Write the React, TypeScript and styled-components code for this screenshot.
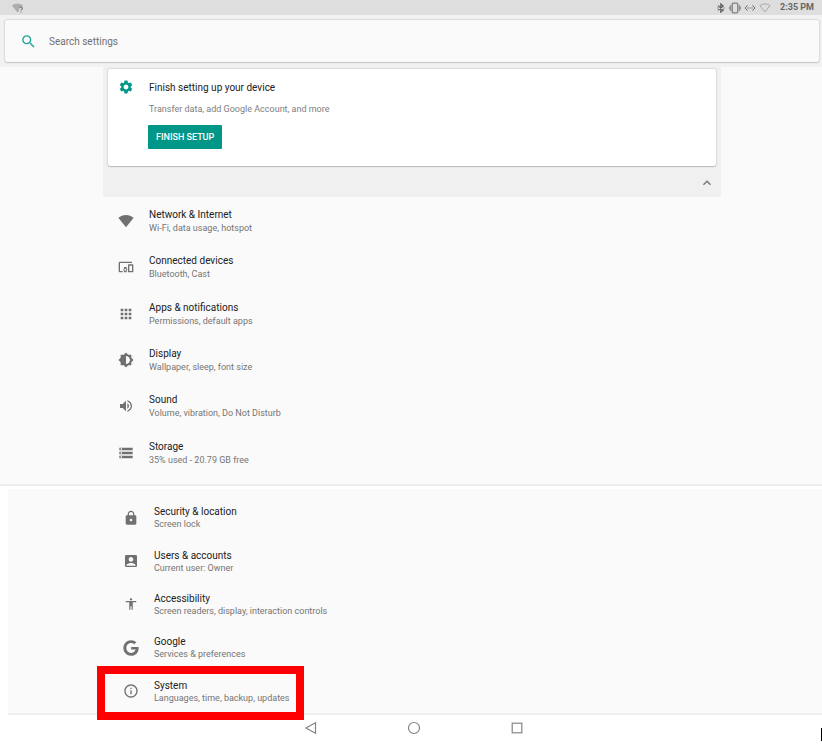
import React from "react";
import styled, { createGlobalStyle } from "styled-components";
import { FaGoogle } from "react-icons/fa";
import {
  MdAccessibility,
  MdAccountBox,
  MdApps,
  MdBrightness6,
  MdDevicesOther,
  MdInfoOutline,
  MdKeyboardArrowUp,
  MdLock,
  MdSearch,
  MdSettings,
  MdStorage,
  MdVolumeUp,
} from "react-icons/md";

const GlobalStyle = createGlobalStyle`
  * { box-sizing: border-box; }
  body {
    margin: 0;
    background: #ffffff;
    color: #212121;
    font-family: Roboto, "Liberation Sans", sans-serif;
    font-size: 10px;
  }
  button, input { font: inherit; color: inherit; }
  svg { display: block; flex: none; }
`;

const Page = styled.div`
  position: relative;
  min-height: 100vh;
  overflow: hidden;
`;

const StatusBar = styled.header`
  display: flex;
  align-items: center;
  height: 15px;
  padding: 0 8px 0 12px;
  background: #dedede;
  color: #666666;
`;

const StatusIcons = styled.div`
  display: flex;
  align-items: center;
  gap: 3px;
  margin-left: auto;
`;

const Clock = styled.time`
  margin-left: 6px;
  font-size: 9px;
  line-height: 15px;
  font-weight: 700;
  color: #666666;
`;

const SearchArea = styled.div`
  padding: 5px 3px 5px 5px;
  background: #f2f2f2;
`;

const SearchBox = styled.label`
  display: flex;
  align-items: center;
  gap: 12px;
  height: 42px;
  padding-left: 15px;
  border-radius: 2px;
  background: #fafafa;
  box-shadow: 0 0 2px rgba(0, 0, 0, 0.32), 0 1px 1px rgba(0, 0, 0, 0.1);
  color: #26a69a;
`;

const SearchInput = styled.input`
  flex: 1;
  min-width: 0;
  padding: 0;
  border: 0;
  outline: 0;
  background: transparent;
  font-size: 10px;
  color: #757575;
  &::placeholder { color: #707070; opacity: 1; }
`;

const MainPanel = styled.main`
  padding: 0 101px 8px 103px;
  border-bottom: 2px solid #ededed;
  background: #fafafa;
`;

const Suggestions = styled.section`
  margin-bottom: 1px;
  padding: 2px 5px 0;
  background: #f0f0f0;
`;

const SetupCard = styled.article`
  display: flex;
  height: 97px;
  padding-top: 10px;
  border-radius: 2px;
  background: #ffffff;
  box-shadow: 0 0 2px rgba(0, 0, 0, 0.28), 0 1px 1px rgba(0, 0, 0, 0.16);
`;

const CardIcon = styled.div`
  display: flex;
  justify-content: center;
  width: 36px;
  margin-right: 5px;
  color: #009688;
`;

const CardTitle = styled.h2`
  margin: 0;
  font-size: 10px;
  line-height: 18px;
  font-weight: 400;
`;

const CardText = styled.p`
  margin: 5px 0 9px;
  font-size: 9px;
  line-height: 14px;
  color: #808080;
`;

const SetupButton = styled.button`
  display: block;
  height: 24px;
  margin-left: -1px;
  padding: 0 8px;
  border: 0;
  border-radius: 1px;
  background: #009688;
  color: #ffffff;
  font-size: 9px;
  font-weight: 500;
`;

const CollapseBar = styled.div`
  display: flex;
  justify-content: flex-end;
  align-items: center;
  height: 31px;
  padding: 2px 1px 0 0;
`;

const CollapseButton = styled.button`
  padding: 0;
  border: 0;
  background: transparent;
  color: #757575;
`;

const List = styled.ul<{ $compact?: boolean }>`
  display: grid;
  grid-auto-rows: 1fr;
  min-height: ${(p) => (p.$compact ? 217 : 278)}px;
  margin: 0;
  padding: 0;
  list-style: none;
`;

const Item = styled.li`
  position: relative;
  display: flex;
`;

const ItemLink = styled.a`
  flex: 1;
  display: flex;
  align-items: center;
  color: inherit;
  text-decoration: none;
`;

const ItemIcon = styled.span`
  display: flex;
  justify-content: center;
  width: 46px;
  color: #707070;
`;

const ItemText = styled.span`
  display: flex;
  flex-direction: column;
`;

const ItemTitle = styled.span<{ $compact?: boolean }>`
  font-size: 10px;
  line-height: ${(p) => (p.$compact ? 13 : 14)}px;
`;

const ItemSummary = styled.span`
  font-size: 9px;
  line-height: 12px;
  color: #757575;
`;

const Highlight = styled.span`
  position: absolute;
  left: -11px;
  top: -4px;
  width: 207px;
  height: 54px;
  border: 8px solid #ff0000;
  pointer-events: none;
`;

const LowerPanel = styled.section`
  margin: 3px 0 0 8px;
  padding: 7px 0 0 100px;
  border-bottom: 2px solid #efefef;
  background: #fafafa;
`;

const NavBar = styled.nav`
  display: flex;
  justify-content: center;
  gap: 89px;
  padding: 6px 0 0 5px;
`;

const NavButton = styled.button`
  padding: 0;
  border: 0;
  background: transparent;
  color: #858585;
`;

const TextCaret = styled.span`
  position: absolute;
  right: 0;
  top: 728px;
  width: 1px;
  height: 13px;
  background: #000000;
`;

const WifiIcon = ({ size = 16 }: { size?: number }) => (
  <svg width={size} height={size} viewBox="0 0 24 24" fill="currentColor" aria-hidden="true">
    <path d="M12 21.5 0.5 7.2C3.7 4.6 7.6 3 12 3s8.3 1.6 11.5 4.2Z" />
  </svg>
);

const WifiUnknownIcon = () => (
  <svg width="12" height="10" viewBox="0 0 12 10" aria-hidden="true">
    <path d="M5.5 9.5 0 2.7C1.6 1.3 3.5.6 5.5.6s4 .7 5.5 2.1L9 4H7v4Z" fill="#adadad" />
    <path d="M7.6 5.3c0-1.7 2.8-1.6 2.8.1 0 1-1.4 1.1-1.4 2.2M9 8.5v1" stroke="#757575" strokeWidth="1.1" fill="none" />
  </svg>
);

const WifiEmptyIcon = () => (
  <svg width="12" height="10" viewBox="0 0 12 10" aria-hidden="true">
    <path d="M6 8.8 1 2.6C4 .4 8 .4 11 2.6Z" fill="none" stroke="#a6a6a6" />
  </svg>
);

const BluetoothIcon = () => (
  <svg width="10" height="10" viewBox="0 0 10 10" fill="none" stroke="#5c5c5c" strokeWidth="1.2" aria-hidden="true">
    <path d="M2 2.6 7.2 7 4.8 9.1V.9L7.2 3 2 7.4" />
    <path d="M1.2 5h1.2M7.4 5h1.2" />
  </svg>
);

const VibrateIcon = () => (
  <svg width="12" height="12" viewBox="0 0 12 12" fill="none" stroke="#808080" aria-hidden="true">
    <rect x="3.2" y="1.2" width="5.6" height="9.6" rx="1" strokeWidth="1.3" />
    <path d="M1.6 3v6M10.4 3v6M.4 4.5v3M11.6 4.5v3" strokeWidth=".9" />
  </svg>
);

const EthernetIcon = () => (
  <svg width="12" height="8" viewBox="0 0 12 8" fill="none" stroke="#6b6b6b" aria-hidden="true">
    <path d="M3.5 1.3 1 4l2.5 2.7M8.5 1.3 11 4 8.5 6.7" />
    <path d="M3.2 4h1.4M5.4 4h1.2M7.4 4h1.4" />
  </svg>
);

type Entry = { title: string; summary: string; icon: React.ReactNode; marked?: boolean };

const mainEntries: Entry[] = [
  { title: "Network & Internet", summary: "Wi-Fi, data usage, hotspot", icon: <WifiIcon /> },
  { title: "Connected devices", summary: "Bluetooth, Cast", icon: <MdDevicesOther size={16} /> },
  { title: "Apps & notifications", summary: "Permissions, default apps", icon: <MdApps size={16} /> },
  { title: "Display", summary: "Wallpaper, sleep, font size", icon: <MdBrightness6 size={16} /> },
  { title: "Sound", summary: "Volume, vibration, Do Not Disturb", icon: <MdVolumeUp size={16} /> },
  { title: "Storage", summary: "35% used - 20.79 GB free", icon: <MdStorage size={16} /> },
];

const lowerEntries: Entry[] = [
  { title: "Security & location", summary: "Screen lock", icon: <MdLock size={16} /> },
  { title: "Users & accounts", summary: "Current user: Owner", icon: <MdAccountBox size={16} /> },
  { title: "Accessibility", summary: "Screen readers, display, interaction controls", icon: <MdAccessibility size={14} /> },
  { title: "Google", summary: "Services & preferences", icon: <FaGoogle size={16} /> },
  { title: "System", summary: "Languages, time, backup, updates", icon: <MdInfoOutline size={16} />, marked: true },
];

const SettingsList = ({ entries, compact }: { entries: Entry[]; compact?: boolean }) => (
  <List $compact={compact}>
    {entries.map((e) => (
      <Item key={e.title}>
        <ItemLink href="#">
          <ItemIcon>{e.icon}</ItemIcon>
          <ItemText>
            <ItemTitle $compact={compact}>{e.title}</ItemTitle>
            <ItemSummary>{e.summary}</ItemSummary>
          </ItemText>
        </ItemLink>
        {e.marked && <Highlight />}
      </Item>
    ))}
  </List>
);

export default function App() {
  return (
    <Page>
      <GlobalStyle />
      <StatusBar>
        <WifiUnknownIcon />
        <StatusIcons>
          <BluetoothIcon />
          <VibrateIcon />
          <EthernetIcon />
          <WifiEmptyIcon />
          <Clock>2:35 PM</Clock>
        </StatusIcons>
      </StatusBar>
      <SearchArea>
        <SearchBox>
          <MdSearch size={17} />
          <SearchInput type="text" placeholder="Search settings" aria-label="Search settings" />
        </SearchBox>
      </SearchArea>
      <MainPanel>
        <Suggestions>
          <SetupCard>
            <CardIcon>
              <MdSettings size={16} />
            </CardIcon>
            <div>
              <CardTitle>Finish setting up your device</CardTitle>
              <CardText>Transfer data, add Google Account, and more</CardText>
              <SetupButton type="button">FINISH SETUP</SetupButton>
            </div>
          </SetupCard>
          <CollapseBar>
            <CollapseButton type="button" aria-label="Collapse suggestions">
              <MdKeyboardArrowUp size={16} />
            </CollapseButton>
          </CollapseBar>
        </Suggestions>
        <SettingsList entries={mainEntries} />
      </MainPanel>
      <LowerPanel>
        <SettingsList entries={lowerEntries} compact />
      </LowerPanel>
      <NavBar>
        <NavButton type="button" aria-label="Back">
          <svg width="14" height="14" viewBox="0 0 14 14" fill="none" stroke="currentColor" strokeWidth="1.2">
            <path d="M11.5 1.8v10.4L2 7Z" />
          </svg>
        </NavButton>
        <NavButton type="button" aria-label="Home">
          <svg width="14" height="14" viewBox="0 0 14 14" fill="none" stroke="currentColor" strokeWidth="1.2">
            <circle cx="7" cy="7" r="5.5" />
          </svg>
        </NavButton>
        <NavButton type="button" aria-label="Recent apps">
          <svg width="14" height="14" viewBox="0 0 14 14" fill="none" stroke="currentColor" strokeWidth="1.2">
            <rect x="2.2" y="2.2" width="9.6" height="9.6" />
          </svg>
        </NavButton>
      </NavBar>
      <TextCaret />
    </Page>
  );
}
